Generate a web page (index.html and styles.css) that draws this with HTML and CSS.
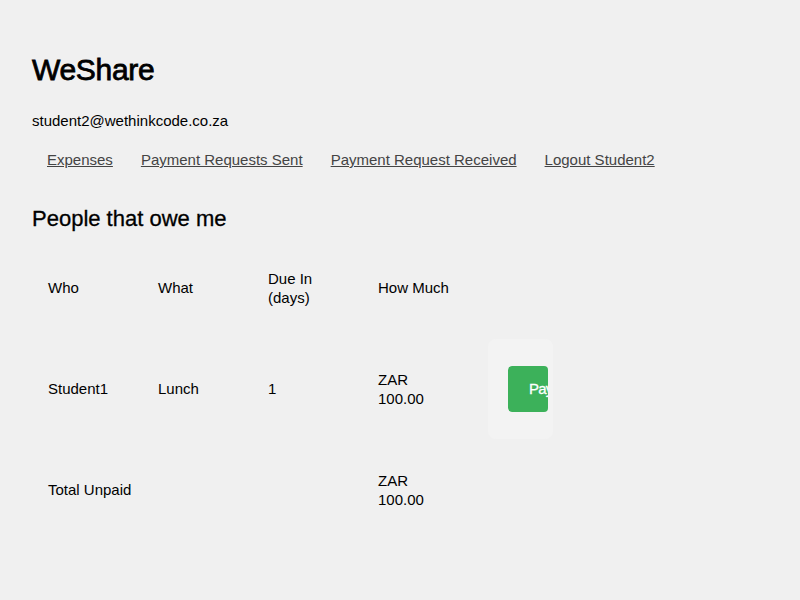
FILE: index.html
```html
<!DOCTYPE html>
<html>
<head>
<meta charset="utf-8">
<link rel="stylesheet" href="styles.css">
</head>
<body>
<main class="page">
  <h1 class="brand">WeShare</h1>
  <div class="user">student2@wethinkcode.co.za</div>
  <nav class="nav">
    <a href="#">Expenses</a>
    <a href="#">Payment Requests Sent</a>
    <a href="#">Payment Request Received</a>
    <a href="#">Logout Student2</a>
  </nav>
  <h2 class="section">People that owe me</h2>
  <table class="owed">
    <colgroup>
      <col class="c-text"><col class="c-text"><col class="c-text"><col class="c-text"><col class="c-action">
    </colgroup>
    <tr>
      <td>Who</td>
      <td>What</td>
      <td>Due In (days)</td>
      <td>How Much</td>
      <td></td>
    </tr>
    <tr>
      <td>Student1</td>
      <td>Lunch</td>
      <td>1</td>
      <td>ZAR 100.00</td>
      <td><div class="action"><div class="clip"><button class="pay">Pay</button></div></div></td>
    </tr>
    <tr>
      <td class="nowrap">Total Unpaid</td>
      <td></td>
      <td></td>
      <td>ZAR 100.00</td>
      <td></td>
    </tr>
  </table>
</main>
</body>
</html>
```
FILE: styles.css
```css
html, body {
  margin: 0;
  padding: 0;
  background: #f0f0f0;
  font-family: "Liberation Sans", Arial, sans-serif;
  color: #000;
}
.page {
  padding: 48px 32px 0 32px;
}
.brand {
  margin: 0;
  font-size: 30px;
  line-height: 44px;
  font-weight: normal;
  letter-spacing: -0.3px;
  -webkit-text-stroke: 0.8px #000;
}
.user {
  margin-top: 19px;
  font-size: 15px;
  line-height: 20px;
}
.nav {
  display: flex;
  gap: 28px;
  padding-left: 15px;
  margin-top: 19px;
}
.nav a {
  color: #444;
  font-size: 15px;
  line-height: 20px;
  text-decoration: underline;
}
.section {
  margin: 35px 0 0 0;
  font-size: 22px;
  line-height: 28px;
  font-weight: normal;
  -webkit-text-stroke: 0.3px #000;
}
.owed {
  border-collapse: collapse;
  table-layout: fixed;
  width: 521px;
  margin-top: 4px;
  font-size: 15px;
}
.c-text { width: 110px; }
.c-action { width: 81px; }
.owed td {
  padding: 0 16px;
  height: 101px;
  line-height: 19px;
  vertical-align: middle;
  text-align: left;
}
.owed td.nowrap { white-space: nowrap; }
.action {
  display: flex;
  align-items: center;
  width: 40px;
  height: 100px;
  padding: 0 5px 0 20px;
  background: #f3f3f3;
  border-radius: 8px;
}
.clip {
  width: 40px;
  overflow: hidden;
  border-radius: 4px;
}
.pay {
  display: block;
  width: 80px;
  height: 46px;
  border: none;
  border-radius: 4px;
  background: #3cb15a;
  color: #fff;
  font-family: inherit;
  font-size: 15px;
  font-weight: normal;
  letter-spacing: -0.8px;
  -webkit-text-stroke: 0.3px #fff;
  text-align: left;
  padding: 0 0 0 21px;
  cursor: pointer;
}
```
